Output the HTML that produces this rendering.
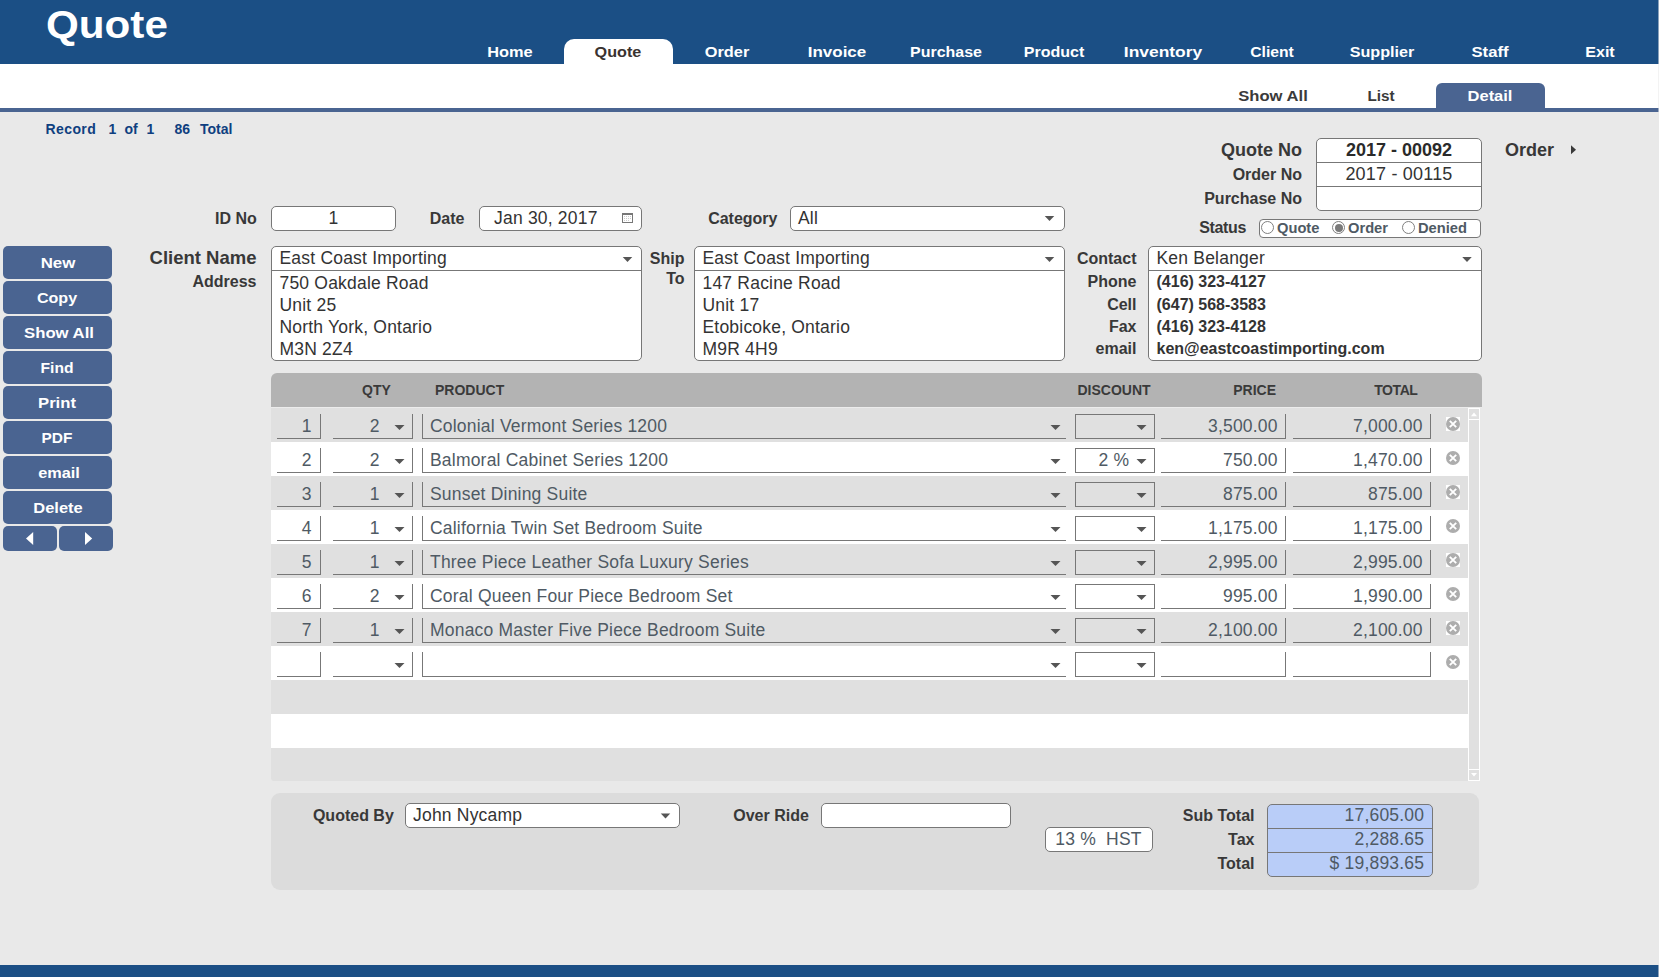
<!DOCTYPE html>
<html><head><meta charset="utf-8"><style>
html,body{margin:0;padding:0;}
body{width:1659px;height:977px;position:relative;overflow:hidden;background:#e9e9e9;font-family:"Liberation Sans",sans-serif;}
body>div,body>svg{position:absolute;}
</style></head><body>
<div style="left:0px;top:0px;width:1659px;height:64px;background:#1b4f85;"></div>
<div style="top:5.83px;font-size:38px;line-height:38px;font-weight:700;color:#fff;white-space:nowrap;transform:scaleX(1.11);left:46px;transform-origin:left center;">Quote</div>
<div style="top:45.15px;font-size:14px;line-height:14px;font-weight:700;color:#fff;white-space:nowrap;transform:scaleX(1.1684);left:109.60000000000002px;width:800px;text-align:center;">Home</div>
<div style="left:564px;top:39px;width:109px;height:25px;background:#fff;border-radius:10px 10px 0 0;"></div>
<div style="top:45.15px;font-size:14px;line-height:14px;font-weight:700;color:#3a3330;white-space:nowrap;transform:scaleX(1.1557);left:218.29999999999995px;width:800px;text-align:center;">Quote</div>
<div style="top:45.15px;font-size:14px;line-height:14px;font-weight:700;color:#fff;white-space:nowrap;transform:scaleX(1.1684);left:327.4px;width:800px;text-align:center;">Order</div>
<div style="top:45.15px;font-size:14px;line-height:14px;font-weight:700;color:#fff;white-space:nowrap;transform:scaleX(1.2133);left:437.1px;width:800px;text-align:center;">Invoice</div>
<div style="top:45.15px;font-size:14px;line-height:14px;font-weight:700;color:#fff;white-space:nowrap;transform:scaleX(1.1396);left:545.9px;width:800px;text-align:center;">Purchase</div>
<div style="top:45.15px;font-size:14px;line-height:14px;font-weight:700;color:#fff;white-space:nowrap;transform:scaleX(1.1435);left:653.7px;width:800px;text-align:center;">Product</div>
<div style="top:45.15px;font-size:14px;line-height:14px;font-weight:700;color:#fff;white-space:nowrap;transform:scaleX(1.2437);left:763.3px;width:800px;text-align:center;">Inventory</div>
<div style="top:45.15px;font-size:14px;line-height:14px;font-weight:700;color:#fff;white-space:nowrap;transform:scaleX(1.12);left:872.3px;width:800px;text-align:center;">Client</div>
<div style="top:45.15px;font-size:14px;line-height:14px;font-weight:700;color:#fff;white-space:nowrap;transform:scaleX(1.1526);left:981.5999999999999px;width:800px;text-align:center;">Supplier</div>
<div style="top:45.15px;font-size:14px;line-height:14px;font-weight:700;color:#fff;white-space:nowrap;transform:scaleX(1.1911);left:1090.2px;width:800px;text-align:center;">Staff</div>
<div style="top:45.15px;font-size:14px;line-height:14px;font-weight:700;color:#fff;white-space:nowrap;transform:scaleX(1.1471);left:1200.0px;width:800px;text-align:center;">Exit</div>
<div style="left:0px;top:64px;width:1659px;height:44px;background:#fff;"></div>
<div style="left:0px;top:108px;width:1659px;height:4px;background:#4a6491;"></div>
<div style="top:88.95px;font-size:14px;line-height:14px;font-weight:700;color:#3a3a3a;white-space:nowrap;transform:scaleX(1.1867);left:873.4000000000001px;width:800px;text-align:center;">Show All</div>
<div style="top:88.95px;font-size:14px;line-height:14px;font-weight:700;color:#3a3a3a;white-space:nowrap;transform:scaleX(1.0898);left:981.3px;width:800px;text-align:center;">List</div>
<div style="left:1436px;top:83px;width:109px;height:25px;background:#4a6491;border-radius:6px 6px 0 0;"></div>
<div style="top:88.95px;font-size:14px;line-height:14px;font-weight:700;color:#fff;white-space:nowrap;transform:scaleX(1.1778);left:1090.3px;width:800px;text-align:center;">Detail</div>
<div style="top:122.15px;font-size:14px;line-height:14px;font-weight:700;color:#0f3f80;white-space:nowrap;left:45.5px;letter-spacing:0.4px;">Record</div>
<div style="top:122.15px;font-size:14px;line-height:14px;font-weight:700;color:#0f3f80;white-space:nowrap;left:108.5px;">1</div>
<div style="top:122.15px;font-size:14px;line-height:14px;font-weight:700;color:#0f3f80;white-space:nowrap;left:124.5px;">of</div>
<div style="top:122.15px;font-size:14px;line-height:14px;font-weight:700;color:#0f3f80;white-space:nowrap;left:146.5px;">1</div>
<div style="top:122.15px;font-size:14px;line-height:14px;font-weight:700;color:#0f3f80;white-space:nowrap;left:174.5px;">86</div>
<div style="top:122.15px;font-size:14px;line-height:14px;font-weight:700;color:#0f3f80;white-space:nowrap;left:200px;">Total</div>
<div style="left:0px;top:965px;width:1659px;height:12px;background:#1b4f85;"></div>
<div style="left:3px;top:246px;width:109px;height:33px;background:#4a6491;border-radius:5px;"></div>
<div style="top:256.15px;font-size:14px;line-height:14px;font-weight:700;color:#fff;white-space:nowrap;transform:scaleX(1.2029);left:-342.5px;width:800px;text-align:center;">New</div>
<div style="left:3px;top:281px;width:109px;height:33px;background:#4a6491;border-radius:5px;"></div>
<div style="top:291.15px;font-size:14px;line-height:14px;font-weight:700;color:#fff;white-space:nowrap;transform:scaleX(1.1474);left:-342.6px;width:800px;text-align:center;">Copy</div>
<div style="left:3px;top:316px;width:109px;height:33px;background:#4a6491;border-radius:5px;"></div>
<div style="top:326.15px;font-size:14px;line-height:14px;font-weight:700;color:#fff;white-space:nowrap;transform:scaleX(1.1937);left:-341.5px;width:800px;text-align:center;">Show All</div>
<div style="left:3px;top:351px;width:109px;height:33px;background:#4a6491;border-radius:5px;"></div>
<div style="top:361.15px;font-size:14px;line-height:14px;font-weight:700;color:#fff;white-space:nowrap;transform:scaleX(1.1166);left:-342.9px;width:800px;text-align:center;">Find</div>
<div style="left:3px;top:386px;width:109px;height:33px;background:#4a6491;border-radius:5px;"></div>
<div style="top:396.15px;font-size:14px;line-height:14px;font-weight:700;color:#fff;white-space:nowrap;transform:scaleX(1.1904);left:-342.8px;width:800px;text-align:center;">Print</div>
<div style="left:3px;top:421px;width:109px;height:33px;background:#4a6491;border-radius:5px;"></div>
<div style="top:431.15px;font-size:14px;line-height:14px;font-weight:700;color:#fff;white-space:nowrap;transform:scaleX(1.103);left:-342.7px;width:800px;text-align:center;">PDF</div>
<div style="left:3px;top:456px;width:109px;height:33px;background:#4a6491;border-radius:5px;"></div>
<div style="top:466.15px;font-size:14px;line-height:14px;font-weight:700;color:#fff;white-space:nowrap;transform:scaleX(1.1653);left:-341.1px;width:800px;text-align:center;">email</div>
<div style="left:3px;top:491px;width:109px;height:33px;background:#4a6491;border-radius:5px;"></div>
<div style="top:501.15px;font-size:14px;line-height:14px;font-weight:700;color:#fff;white-space:nowrap;transform:scaleX(1.1744);left:-342.4px;width:800px;text-align:center;">Delete</div>
<div style="left:3px;top:526px;width:54px;height:25px;background:#4a6491;border-radius:5px;"></div>
<div style="left:59px;top:526px;width:54px;height:25px;background:#4a6491;border-radius:5px;"></div>
<svg style="left:0;top:0;width:1659px;height:977px" width="1659" height="977"><polygon points="33.2,532 33.2,545 26,538.5" fill="#fff"/><polygon points="85,532 85,545 92.2,538.5" fill="#fff"/></svg>
<div style="top:140.76px;font-size:18px;line-height:18px;font-weight:700;color:#383838;white-space:nowrap;right:357.00px;">Quote No</div>
<div style="top:166.96px;font-size:16px;line-height:16px;font-weight:700;color:#383838;white-space:nowrap;right:357.00px;">Order No</div>
<div style="top:191.46px;font-size:16px;line-height:16px;font-weight:700;color:#383838;white-space:nowrap;right:357.00px;">Purchase No</div>
<div style="left:1316px;top:138px;width:166px;height:73px;border:1px solid #777;border-radius:5px;background:#fff;box-sizing:border-box;"></div>
<div style="left:1316px;top:162px;width:166px;height:1px;background:#777;"></div>
<div style="left:1316px;top:186px;width:166px;height:1px;background:#777;"></div>
<div style="top:141.26px;font-size:18px;line-height:18px;font-weight:700;color:#2a2a2a;white-space:nowrap;left:999px;width:800px;text-align:center;">2017 - 00092</div>
<div style="top:165.26px;font-size:18px;line-height:18px;font-weight:400;color:#333;white-space:nowrap;letter-spacing:0.2px;left:999px;width:800px;text-align:center;">2017 - 00115</div>
<div style="top:140.76px;font-size:18px;line-height:18px;font-weight:700;color:#383838;white-space:nowrap;left:1505px;">Order</div>
<svg style="left:0;top:0;width:1659px;height:977px" width="1659" height="977"><polygon points="1571,145.2 1571,154.2 1576,149.7" fill="#3a3a3a"/></svg>
<div style="top:219.66px;font-size:16px;line-height:16px;font-weight:700;color:#383838;white-space:nowrap;right:413.00px;letter-spacing:-0.35px;">Status</div>
<div style="left:1259px;top:219px;width:222px;height:19px;border:1px solid #777;border-radius:4px;background:#fff;box-sizing:border-box;"></div>
<div style="left:1261.0px;top:221px;width:13px;height:13px;border-radius:50%;border:1px solid #808080;box-sizing:border-box;background:#fff;"></div>
<div style="top:220.86px;font-size:14.7px;line-height:14.7px;font-weight:700;color:#4f5a64;white-space:nowrap;left:1277.0px;">Quote</div>
<div style="left:1332.0px;top:221px;width:13px;height:13px;border-radius:50%;border:1px solid #808080;box-sizing:border-box;background:#fff;"></div>
<div style="left:1334.5px;top:223.5px;width:8px;height:8px;border-radius:50%;background:#7a7a7a;"></div>
<div style="top:220.86px;font-size:14.7px;line-height:14.7px;font-weight:700;color:#4f5a64;white-space:nowrap;left:1348.0px;">Order</div>
<div style="left:1402.0px;top:221px;width:13px;height:13px;border-radius:50%;border:1px solid #808080;box-sizing:border-box;background:#fff;"></div>
<div style="top:220.86px;font-size:14.7px;line-height:14.7px;font-weight:700;color:#4f5a64;white-space:nowrap;left:1418.0px;">Denied</div>
<div style="top:211.46px;font-size:16px;line-height:16px;font-weight:700;color:#383838;white-space:nowrap;right:1402.20px;">ID No</div>
<div style="left:271px;top:206px;width:125px;height:25px;border:1px solid #777;border-radius:5px;background:#fff;box-sizing:border-box;"></div>
<div style="top:210.19px;font-size:17.5px;line-height:17.5px;font-weight:400;color:#333;white-space:nowrap;letter-spacing:0.2px;left:-66.5px;width:800px;text-align:center;">1</div>
<div style="top:211.46px;font-size:16px;line-height:16px;font-weight:700;color:#383838;white-space:nowrap;right:1194.50px;">Date</div>
<div style="left:479px;top:206px;width:163px;height:25px;border:1px solid #777;border-radius:5px;background:#fff;box-sizing:border-box;"></div>
<div style="top:210.19px;font-size:17.5px;line-height:17.5px;font-weight:400;color:#333;white-space:nowrap;letter-spacing:0.2px;left:494px;">Jan 30, 2017</div>
<svg style="left:622px;top:213px;width:11px;height:10px" width="11" height="10"><rect x="0.5" y="0.5" width="10" height="9" fill="#fff" stroke="#777" stroke-width="1"/><rect x="0" y="0" width="11" height="2" fill="#777"/><g fill="#ccc"><rect x="2" y="3" width="1" height="1"/><rect x="4" y="3" width="1" height="1"/><rect x="6" y="3" width="1" height="1"/><rect x="8" y="3" width="1" height="1"/><rect x="2" y="5" width="1" height="1"/><rect x="4" y="5" width="1" height="1"/><rect x="6" y="5" width="1" height="1"/><rect x="8" y="5" width="1" height="1"/><rect x="2" y="7" width="1" height="1"/><rect x="4" y="7" width="1" height="1"/><rect x="6" y="7" width="1" height="1"/></g></svg>
<div style="top:211.46px;font-size:16px;line-height:16px;font-weight:700;color:#383838;white-space:nowrap;right:881.50px;">Category</div>
<div style="left:790px;top:206px;width:275px;height:25px;border:1px solid #777;border-radius:5px;background:#fff;box-sizing:border-box;"></div>
<div style="top:210.19px;font-size:17.5px;line-height:17.5px;font-weight:400;color:#333;white-space:nowrap;letter-spacing:0.2px;left:798px;">All</div>
<div style="top:249.34px;font-size:18.5px;line-height:18.5px;font-weight:700;color:#383838;white-space:nowrap;right:1402.50px;">Client Name</div>
<div style="top:274.46px;font-size:16px;line-height:16px;font-weight:700;color:#383838;white-space:nowrap;right:1402.50px;">Address</div>
<div style="left:271px;top:246px;width:371px;height:115px;border:1px solid #777;border-radius:5px;background:#fff;box-sizing:border-box;"></div>
<div style="left:271px;top:270px;width:371px;height:1px;background:#777;"></div>
<div style="top:250.19px;font-size:17.5px;line-height:17.5px;font-weight:400;color:#333;white-space:nowrap;letter-spacing:0.2px;left:279.5px;">East Coast Importing</div>
<div style="top:274.79px;font-size:17.5px;line-height:17.5px;font-weight:400;color:#333;white-space:nowrap;letter-spacing:0.2px;left:279.5px;">750 Oakdale Road</div>
<div style="top:296.79px;font-size:17.5px;line-height:17.5px;font-weight:400;color:#333;white-space:nowrap;letter-spacing:0.2px;left:279.5px;">Unit 25</div>
<div style="top:318.79px;font-size:17.5px;line-height:17.5px;font-weight:400;color:#333;white-space:nowrap;letter-spacing:0.2px;left:279.5px;">North York, Ontario</div>
<div style="top:340.79px;font-size:17.5px;line-height:17.5px;font-weight:400;color:#333;white-space:nowrap;letter-spacing:0.2px;left:279.5px;">M3N 2Z4</div>
<div style="top:250.66px;font-size:16px;line-height:16px;font-weight:700;color:#383838;white-space:nowrap;right:974.50px;">Ship</div>
<div style="top:270.66px;font-size:16px;line-height:16px;font-weight:700;color:#383838;white-space:nowrap;right:974.50px;">To</div>
<div style="left:694px;top:246px;width:371px;height:115px;border:1px solid #777;border-radius:5px;background:#fff;box-sizing:border-box;"></div>
<div style="left:694px;top:270px;width:371px;height:1px;background:#777;"></div>
<div style="top:250.19px;font-size:17.5px;line-height:17.5px;font-weight:400;color:#333;white-space:nowrap;letter-spacing:0.2px;left:702.5px;">East Coast Importing</div>
<div style="top:274.79px;font-size:17.5px;line-height:17.5px;font-weight:400;color:#333;white-space:nowrap;letter-spacing:0.2px;left:702.5px;">147 Racine Road</div>
<div style="top:296.79px;font-size:17.5px;line-height:17.5px;font-weight:400;color:#333;white-space:nowrap;letter-spacing:0.2px;left:702.5px;">Unit 17</div>
<div style="top:318.79px;font-size:17.5px;line-height:17.5px;font-weight:400;color:#333;white-space:nowrap;letter-spacing:0.2px;left:702.5px;">Etobicoke, Ontario</div>
<div style="top:340.79px;font-size:17.5px;line-height:17.5px;font-weight:400;color:#333;white-space:nowrap;letter-spacing:0.2px;left:702.5px;">M9R 4H9</div>
<div style="top:251.46px;font-size:16px;line-height:16px;font-weight:700;color:#383838;white-space:nowrap;right:522.50px;">Contact</div>
<div style="top:273.66px;font-size:16px;line-height:16px;font-weight:700;color:#383838;white-space:nowrap;right:522.50px;">Phone</div>
<div style="top:296.76px;font-size:16px;line-height:16px;font-weight:700;color:#383838;white-space:nowrap;right:522.50px;">Cell</div>
<div style="top:318.86px;font-size:16px;line-height:16px;font-weight:700;color:#383838;white-space:nowrap;right:522.50px;">Fax</div>
<div style="top:340.96px;font-size:16px;line-height:16px;font-weight:700;color:#383838;white-space:nowrap;right:522.50px;">email</div>
<div style="left:1148px;top:246px;width:334px;height:115px;border:1px solid #777;border-radius:5px;background:#fff;box-sizing:border-box;"></div>
<div style="left:1148px;top:270px;width:334px;height:1px;background:#777;"></div>
<div style="top:250.19px;font-size:17.5px;line-height:17.5px;font-weight:400;color:#333;white-space:nowrap;letter-spacing:0.2px;left:1156.5px;">Ken Belanger</div>
<div style="top:273.66px;font-size:16px;line-height:16px;font-weight:700;color:#333;white-space:nowrap;left:1156.5px;">(416) 323-4127</div>
<div style="top:296.76px;font-size:16px;line-height:16px;font-weight:700;color:#333;white-space:nowrap;left:1156.5px;">(647) 568-3583</div>
<div style="top:318.86px;font-size:16px;line-height:16px;font-weight:700;color:#333;white-space:nowrap;left:1156.5px;">(416) 323-4128</div>
<div style="top:340.96px;font-size:16px;line-height:16px;font-weight:700;color:#333;white-space:nowrap;left:1156.5px;">ken@eastcoastimporting.com</div>
<div style="left:271px;top:373px;width:1211px;height:34px;background:#b3b3b3;border-radius:6px 6px 0 0;"></div>
<div style="left:271px;top:407px;width:1211px;height:1px;background:#ececec;"></div>
<div style="top:383.35px;font-size:14px;line-height:14px;font-weight:700;color:#3a3a3a;white-space:nowrap;left:362px;">QTY</div>
<div style="top:383.35px;font-size:14px;line-height:14px;font-weight:700;color:#3a3a3a;white-space:nowrap;left:435px;">PRODUCT</div>
<div style="top:383.35px;font-size:14px;line-height:14px;font-weight:700;color:#3a3a3a;white-space:nowrap;left:1077.5px;">DISCOUNT</div>
<div style="top:383.35px;font-size:14px;line-height:14px;font-weight:700;color:#3a3a3a;white-space:nowrap;right:383.00px;">PRICE</div>
<div style="top:383.35px;font-size:14px;line-height:14px;font-weight:700;color:#3a3a3a;white-space:nowrap;right:241.50px;letter-spacing:-0.4px;">TOTAL</div>
<div style="left:271px;top:408px;width:1197px;height:373px;background:#e0e0e0;border-radius:0 0 0 3px;"></div>
<div style="left:271px;top:442px;width:1197px;height:34px;background:#fff;"></div>
<div style="left:271px;top:510px;width:1197px;height:34px;background:#fff;"></div>
<div style="left:271px;top:578px;width:1197px;height:34px;background:#fff;"></div>
<div style="left:271px;top:646px;width:1197px;height:34px;background:#fff;"></div>
<div style="left:271px;top:714px;width:1197px;height:34px;background:#fff;"></div>
<div style="left:1468px;top:408px;width:12px;height:373px;border:1px solid #fff;box-sizing:border-box;background:#e0e0e0;"></div>
<div style="left:1469px;top:419px;width:10px;height:1px;background:#fff;"></div>
<div style="left:1469px;top:769px;width:10px;height:1px;background:#fff;"></div>
<svg style="left:0;top:0;width:1659px;height:977px" width="1659" height="977"><polygon points="1471,416.2 1477,416.2 1474,412.6" fill="#fff"/><polygon points="1471,773 1477,773 1474,776.6" fill="#fff"/></svg>
<div style="left:277px;top:414px;width:44px;height:25px;border-right:1px solid #777;border-bottom:1px solid #777;box-sizing:border-box;"></div>
<div style="left:333px;top:414px;width:80px;height:25px;border-right:1px solid #777;border-bottom:1px solid #777;box-sizing:border-box;"></div>
<div style="left:422px;top:414px;width:644px;height:25px;border-left:1px solid #777;border-bottom:1px solid #777;box-sizing:border-box;"></div>
<div style="left:1075px;top:414px;width:80px;height:25px;border:1px solid #777;box-sizing:border-box;"></div>
<div style="left:1161px;top:414px;width:125px;height:25px;border-right:1px solid #777;border-bottom:1px solid #777;box-sizing:border-box;"></div>
<div style="left:1293px;top:414px;width:138px;height:25px;border-right:1px solid #777;border-bottom:1px solid #777;box-sizing:border-box;"></div>
<div style="top:418.19px;font-size:17.5px;line-height:17.5px;font-weight:400;color:#4f5a64;white-space:nowrap;letter-spacing:0.2px;right:1347.30px;">1</div>
<div style="top:418.19px;font-size:17.5px;line-height:17.5px;font-weight:400;color:#4f5a64;white-space:nowrap;letter-spacing:0.2px;right:1279.30px;">2</div>
<div style="top:418.19px;font-size:17.5px;line-height:17.5px;font-weight:400;color:#4f5a64;white-space:nowrap;letter-spacing:0.2px;left:430px;">Colonial Vermont Series 1200</div>
<div style="top:418.19px;font-size:17.5px;line-height:17.5px;font-weight:400;color:#4f5a64;white-space:nowrap;letter-spacing:0.2px;right:381.30px;">3,500.00</div>
<div style="top:418.19px;font-size:17.5px;line-height:17.5px;font-weight:400;color:#4f5a64;white-space:nowrap;letter-spacing:0.2px;right:236.30px;">7,000.00</div>
<svg style="left:1445px;top:416px;width:16px;height:16px" width="16" height="16"><rect x="1" y="1" width="14" height="14" fill="#fff"/><circle cx="8" cy="8" r="7" fill="#adadad"/><path d="M4.8 4.8 L11.2 11.2 M11.2 4.8 L4.8 11.2" stroke="#fff" stroke-width="1.9"/></svg>
<div style="left:277px;top:448px;width:44px;height:25px;border-right:1px solid #777;border-bottom:1px solid #777;box-sizing:border-box;"></div>
<div style="left:333px;top:448px;width:80px;height:25px;border-right:1px solid #777;border-bottom:1px solid #777;box-sizing:border-box;"></div>
<div style="left:422px;top:448px;width:644px;height:25px;border-left:1px solid #777;border-bottom:1px solid #777;box-sizing:border-box;"></div>
<div style="left:1075px;top:448px;width:80px;height:25px;border:1px solid #777;box-sizing:border-box;"></div>
<div style="left:1161px;top:448px;width:125px;height:25px;border-right:1px solid #777;border-bottom:1px solid #777;box-sizing:border-box;"></div>
<div style="left:1293px;top:448px;width:138px;height:25px;border-right:1px solid #777;border-bottom:1px solid #777;box-sizing:border-box;"></div>
<div style="top:452.19px;font-size:17.5px;line-height:17.5px;font-weight:400;color:#4f5a64;white-space:nowrap;letter-spacing:0.2px;right:1347.30px;">2</div>
<div style="top:452.19px;font-size:17.5px;line-height:17.5px;font-weight:400;color:#4f5a64;white-space:nowrap;letter-spacing:0.2px;right:1279.30px;">2</div>
<div style="top:452.19px;font-size:17.5px;line-height:17.5px;font-weight:400;color:#4f5a64;white-space:nowrap;letter-spacing:0.2px;left:430px;">Balmoral Cabinet Series 1200</div>
<div style="top:452.19px;font-size:17.5px;line-height:17.5px;font-weight:400;color:#4f5a64;white-space:nowrap;letter-spacing:0.2px;right:529.80px;">2 %</div>
<div style="top:452.19px;font-size:17.5px;line-height:17.5px;font-weight:400;color:#4f5a64;white-space:nowrap;letter-spacing:0.2px;right:381.30px;">750.00</div>
<div style="top:452.19px;font-size:17.5px;line-height:17.5px;font-weight:400;color:#4f5a64;white-space:nowrap;letter-spacing:0.2px;right:236.30px;">1,470.00</div>
<svg style="left:1445px;top:450px;width:16px;height:16px" width="16" height="16"><circle cx="8" cy="8" r="7" fill="#adadad"/><path d="M4.8 4.8 L11.2 11.2 M11.2 4.8 L4.8 11.2" stroke="#fff" stroke-width="1.9"/></svg>
<div style="left:277px;top:482px;width:44px;height:25px;border-right:1px solid #777;border-bottom:1px solid #777;box-sizing:border-box;"></div>
<div style="left:333px;top:482px;width:80px;height:25px;border-right:1px solid #777;border-bottom:1px solid #777;box-sizing:border-box;"></div>
<div style="left:422px;top:482px;width:644px;height:25px;border-left:1px solid #777;border-bottom:1px solid #777;box-sizing:border-box;"></div>
<div style="left:1075px;top:482px;width:80px;height:25px;border:1px solid #777;box-sizing:border-box;"></div>
<div style="left:1161px;top:482px;width:125px;height:25px;border-right:1px solid #777;border-bottom:1px solid #777;box-sizing:border-box;"></div>
<div style="left:1293px;top:482px;width:138px;height:25px;border-right:1px solid #777;border-bottom:1px solid #777;box-sizing:border-box;"></div>
<div style="top:486.19px;font-size:17.5px;line-height:17.5px;font-weight:400;color:#4f5a64;white-space:nowrap;letter-spacing:0.2px;right:1347.30px;">3</div>
<div style="top:486.19px;font-size:17.5px;line-height:17.5px;font-weight:400;color:#4f5a64;white-space:nowrap;letter-spacing:0.2px;right:1279.30px;">1</div>
<div style="top:486.19px;font-size:17.5px;line-height:17.5px;font-weight:400;color:#4f5a64;white-space:nowrap;letter-spacing:0.2px;left:430px;">Sunset Dining Suite</div>
<div style="top:486.19px;font-size:17.5px;line-height:17.5px;font-weight:400;color:#4f5a64;white-space:nowrap;letter-spacing:0.2px;right:381.30px;">875.00</div>
<div style="top:486.19px;font-size:17.5px;line-height:17.5px;font-weight:400;color:#4f5a64;white-space:nowrap;letter-spacing:0.2px;right:236.30px;">875.00</div>
<svg style="left:1445px;top:484px;width:16px;height:16px" width="16" height="16"><rect x="1" y="1" width="14" height="14" fill="#fff"/><circle cx="8" cy="8" r="7" fill="#adadad"/><path d="M4.8 4.8 L11.2 11.2 M11.2 4.8 L4.8 11.2" stroke="#fff" stroke-width="1.9"/></svg>
<div style="left:277px;top:516px;width:44px;height:25px;border-right:1px solid #777;border-bottom:1px solid #777;box-sizing:border-box;"></div>
<div style="left:333px;top:516px;width:80px;height:25px;border-right:1px solid #777;border-bottom:1px solid #777;box-sizing:border-box;"></div>
<div style="left:422px;top:516px;width:644px;height:25px;border-left:1px solid #777;border-bottom:1px solid #777;box-sizing:border-box;"></div>
<div style="left:1075px;top:516px;width:80px;height:25px;border:1px solid #777;box-sizing:border-box;"></div>
<div style="left:1161px;top:516px;width:125px;height:25px;border-right:1px solid #777;border-bottom:1px solid #777;box-sizing:border-box;"></div>
<div style="left:1293px;top:516px;width:138px;height:25px;border-right:1px solid #777;border-bottom:1px solid #777;box-sizing:border-box;"></div>
<div style="top:520.19px;font-size:17.5px;line-height:17.5px;font-weight:400;color:#4f5a64;white-space:nowrap;letter-spacing:0.2px;right:1347.30px;">4</div>
<div style="top:520.19px;font-size:17.5px;line-height:17.5px;font-weight:400;color:#4f5a64;white-space:nowrap;letter-spacing:0.2px;right:1279.30px;">1</div>
<div style="top:520.19px;font-size:17.5px;line-height:17.5px;font-weight:400;color:#4f5a64;white-space:nowrap;letter-spacing:0.2px;left:430px;">California Twin Set Bedroom Suite</div>
<div style="top:520.19px;font-size:17.5px;line-height:17.5px;font-weight:400;color:#4f5a64;white-space:nowrap;letter-spacing:0.2px;right:381.30px;">1,175.00</div>
<div style="top:520.19px;font-size:17.5px;line-height:17.5px;font-weight:400;color:#4f5a64;white-space:nowrap;letter-spacing:0.2px;right:236.30px;">1,175.00</div>
<svg style="left:1445px;top:518px;width:16px;height:16px" width="16" height="16"><circle cx="8" cy="8" r="7" fill="#adadad"/><path d="M4.8 4.8 L11.2 11.2 M11.2 4.8 L4.8 11.2" stroke="#fff" stroke-width="1.9"/></svg>
<div style="left:277px;top:550px;width:44px;height:25px;border-right:1px solid #777;border-bottom:1px solid #777;box-sizing:border-box;"></div>
<div style="left:333px;top:550px;width:80px;height:25px;border-right:1px solid #777;border-bottom:1px solid #777;box-sizing:border-box;"></div>
<div style="left:422px;top:550px;width:644px;height:25px;border-left:1px solid #777;border-bottom:1px solid #777;box-sizing:border-box;"></div>
<div style="left:1075px;top:550px;width:80px;height:25px;border:1px solid #777;box-sizing:border-box;"></div>
<div style="left:1161px;top:550px;width:125px;height:25px;border-right:1px solid #777;border-bottom:1px solid #777;box-sizing:border-box;"></div>
<div style="left:1293px;top:550px;width:138px;height:25px;border-right:1px solid #777;border-bottom:1px solid #777;box-sizing:border-box;"></div>
<div style="top:554.19px;font-size:17.5px;line-height:17.5px;font-weight:400;color:#4f5a64;white-space:nowrap;letter-spacing:0.2px;right:1347.30px;">5</div>
<div style="top:554.19px;font-size:17.5px;line-height:17.5px;font-weight:400;color:#4f5a64;white-space:nowrap;letter-spacing:0.2px;right:1279.30px;">1</div>
<div style="top:554.19px;font-size:17.5px;line-height:17.5px;font-weight:400;color:#4f5a64;white-space:nowrap;letter-spacing:0.2px;left:430px;">Three Piece Leather Sofa Luxury Series</div>
<div style="top:554.19px;font-size:17.5px;line-height:17.5px;font-weight:400;color:#4f5a64;white-space:nowrap;letter-spacing:0.2px;right:381.30px;">2,995.00</div>
<div style="top:554.19px;font-size:17.5px;line-height:17.5px;font-weight:400;color:#4f5a64;white-space:nowrap;letter-spacing:0.2px;right:236.30px;">2,995.00</div>
<svg style="left:1445px;top:552px;width:16px;height:16px" width="16" height="16"><rect x="1" y="1" width="14" height="14" fill="#fff"/><circle cx="8" cy="8" r="7" fill="#adadad"/><path d="M4.8 4.8 L11.2 11.2 M11.2 4.8 L4.8 11.2" stroke="#fff" stroke-width="1.9"/></svg>
<div style="left:277px;top:584px;width:44px;height:25px;border-right:1px solid #777;border-bottom:1px solid #777;box-sizing:border-box;"></div>
<div style="left:333px;top:584px;width:80px;height:25px;border-right:1px solid #777;border-bottom:1px solid #777;box-sizing:border-box;"></div>
<div style="left:422px;top:584px;width:644px;height:25px;border-left:1px solid #777;border-bottom:1px solid #777;box-sizing:border-box;"></div>
<div style="left:1075px;top:584px;width:80px;height:25px;border:1px solid #777;box-sizing:border-box;"></div>
<div style="left:1161px;top:584px;width:125px;height:25px;border-right:1px solid #777;border-bottom:1px solid #777;box-sizing:border-box;"></div>
<div style="left:1293px;top:584px;width:138px;height:25px;border-right:1px solid #777;border-bottom:1px solid #777;box-sizing:border-box;"></div>
<div style="top:588.19px;font-size:17.5px;line-height:17.5px;font-weight:400;color:#4f5a64;white-space:nowrap;letter-spacing:0.2px;right:1347.30px;">6</div>
<div style="top:588.19px;font-size:17.5px;line-height:17.5px;font-weight:400;color:#4f5a64;white-space:nowrap;letter-spacing:0.2px;right:1279.30px;">2</div>
<div style="top:588.19px;font-size:17.5px;line-height:17.5px;font-weight:400;color:#4f5a64;white-space:nowrap;letter-spacing:0.2px;left:430px;">Coral Queen Four Piece Bedroom Set</div>
<div style="top:588.19px;font-size:17.5px;line-height:17.5px;font-weight:400;color:#4f5a64;white-space:nowrap;letter-spacing:0.2px;right:381.30px;">995.00</div>
<div style="top:588.19px;font-size:17.5px;line-height:17.5px;font-weight:400;color:#4f5a64;white-space:nowrap;letter-spacing:0.2px;right:236.30px;">1,990.00</div>
<svg style="left:1445px;top:586px;width:16px;height:16px" width="16" height="16"><circle cx="8" cy="8" r="7" fill="#adadad"/><path d="M4.8 4.8 L11.2 11.2 M11.2 4.8 L4.8 11.2" stroke="#fff" stroke-width="1.9"/></svg>
<div style="left:277px;top:618px;width:44px;height:25px;border-right:1px solid #777;border-bottom:1px solid #777;box-sizing:border-box;"></div>
<div style="left:333px;top:618px;width:80px;height:25px;border-right:1px solid #777;border-bottom:1px solid #777;box-sizing:border-box;"></div>
<div style="left:422px;top:618px;width:644px;height:25px;border-left:1px solid #777;border-bottom:1px solid #777;box-sizing:border-box;"></div>
<div style="left:1075px;top:618px;width:80px;height:25px;border:1px solid #777;box-sizing:border-box;"></div>
<div style="left:1161px;top:618px;width:125px;height:25px;border-right:1px solid #777;border-bottom:1px solid #777;box-sizing:border-box;"></div>
<div style="left:1293px;top:618px;width:138px;height:25px;border-right:1px solid #777;border-bottom:1px solid #777;box-sizing:border-box;"></div>
<div style="top:622.19px;font-size:17.5px;line-height:17.5px;font-weight:400;color:#4f5a64;white-space:nowrap;letter-spacing:0.2px;right:1347.30px;">7</div>
<div style="top:622.19px;font-size:17.5px;line-height:17.5px;font-weight:400;color:#4f5a64;white-space:nowrap;letter-spacing:0.2px;right:1279.30px;">1</div>
<div style="top:622.19px;font-size:17.5px;line-height:17.5px;font-weight:400;color:#4f5a64;white-space:nowrap;letter-spacing:0.2px;left:430px;">Monaco Master Five Piece Bedroom Suite</div>
<div style="top:622.19px;font-size:17.5px;line-height:17.5px;font-weight:400;color:#4f5a64;white-space:nowrap;letter-spacing:0.2px;right:381.30px;">2,100.00</div>
<div style="top:622.19px;font-size:17.5px;line-height:17.5px;font-weight:400;color:#4f5a64;white-space:nowrap;letter-spacing:0.2px;right:236.30px;">2,100.00</div>
<svg style="left:1445px;top:620px;width:16px;height:16px" width="16" height="16"><rect x="1" y="1" width="14" height="14" fill="#fff"/><circle cx="8" cy="8" r="7" fill="#adadad"/><path d="M4.8 4.8 L11.2 11.2 M11.2 4.8 L4.8 11.2" stroke="#fff" stroke-width="1.9"/></svg>
<div style="left:277px;top:652px;width:44px;height:25px;border-right:1px solid #777;border-bottom:1px solid #777;box-sizing:border-box;"></div>
<div style="left:333px;top:652px;width:80px;height:25px;border-right:1px solid #777;border-bottom:1px solid #777;box-sizing:border-box;"></div>
<div style="left:422px;top:652px;width:644px;height:25px;border-left:1px solid #777;border-bottom:1px solid #777;box-sizing:border-box;"></div>
<div style="left:1075px;top:652px;width:80px;height:25px;border:1px solid #777;box-sizing:border-box;"></div>
<div style="left:1161px;top:652px;width:125px;height:25px;border-right:1px solid #777;border-bottom:1px solid #777;box-sizing:border-box;"></div>
<div style="left:1293px;top:652px;width:138px;height:25px;border-right:1px solid #777;border-bottom:1px solid #777;box-sizing:border-box;"></div>
<svg style="left:1445px;top:654px;width:16px;height:16px" width="16" height="16"><circle cx="8" cy="8" r="7" fill="#adadad"/><path d="M4.8 4.8 L11.2 11.2 M11.2 4.8 L4.8 11.2" stroke="#fff" stroke-width="1.9"/></svg>
<div style="left:271px;top:793px;width:1208px;height:97px;background:#dcdcdc;border-radius:9px;"></div>
<div style="top:807.66px;font-size:16px;line-height:16px;font-weight:700;color:#383838;white-space:nowrap;right:1265.20px;">Quoted By</div>
<div style="left:405px;top:803px;width:275px;height:25px;border:1px solid #777;border-radius:5px;background:#fff;box-sizing:border-box;"></div>
<div style="top:807.19px;font-size:17.5px;line-height:17.5px;font-weight:400;color:#333;white-space:nowrap;letter-spacing:0.2px;left:413px;">John Nycamp</div>
<div style="top:807.66px;font-size:16px;line-height:16px;font-weight:700;color:#383838;white-space:nowrap;right:850.20px;">Over Ride</div>
<div style="left:821px;top:803px;width:190px;height:25px;border:1px solid #777;border-radius:5px;background:#fff;box-sizing:border-box;"></div>
<div style="left:1045px;top:827px;width:108px;height:25px;border:1px solid #777;border-radius:5px;background:#fff;box-sizing:border-box;"></div>
<div style="top:831.19px;font-size:17.5px;line-height:17.5px;font-weight:400;color:#4f5a64;white-space:nowrap;letter-spacing:0.2px;left:698.5px;width:800px;text-align:center;">13 %&nbsp; HST</div>
<div style="top:808.46px;font-size:16px;line-height:16px;font-weight:700;color:#383838;white-space:nowrap;right:404.50px;">Sub Total</div>
<div style="top:832.46px;font-size:16px;line-height:16px;font-weight:700;color:#383838;white-space:nowrap;right:404.50px;">Tax</div>
<div style="top:856.46px;font-size:16px;line-height:16px;font-weight:700;color:#383838;white-space:nowrap;right:404.50px;">Total</div>
<div style="left:1267px;top:804px;width:166px;height:73px;border:1px solid #777;border-radius:5px;background:#b9cdf8;box-sizing:border-box;"></div>
<div style="left:1267px;top:828px;width:166px;height:1px;background:#777;"></div>
<div style="left:1267px;top:852px;width:166px;height:1px;background:#777;"></div>
<div style="top:807.39px;font-size:17.5px;line-height:17.5px;font-weight:400;color:#4f5a64;white-space:nowrap;letter-spacing:0.2px;right:234.80px;">17,605.00</div>
<div style="top:831.39px;font-size:17.5px;line-height:17.5px;font-weight:400;color:#4f5a64;white-space:nowrap;letter-spacing:0.2px;right:234.80px;">2,288.65</div>
<div style="top:855.39px;font-size:17.5px;line-height:17.5px;font-weight:400;color:#4f5a64;white-space:nowrap;letter-spacing:0.2px;right:234.80px;">$ 19,893.65</div>
<div style="left:1658px;top:0px;width:1px;height:977px;background:rgba(233,233,233,0.55);"></div>
<svg style="left:0;top:0;width:1659px;height:977px" width="1659" height="977"><polygon points="1044.75,216.0 1054.25,216.0 1049.5,221.0" fill="#555"/><polygon points="622.75,256.9 632.25,256.9 627.5,261.9" fill="#555"/><polygon points="1044.75,256.9 1054.25,256.9 1049.5,261.9" fill="#555"/><polygon points="1462.25,256.9 1471.75,256.9 1467,261.9" fill="#555"/><polygon points="394.5,425.0 404.5,425.0 399.5,430.0" fill="#555"/><polygon points="1050.5,425.0 1060.5,425.0 1055.5,430.0" fill="#555"/><polygon points="1136.5,425.0 1146.5,425.0 1141.5,430.0" fill="#555"/><polygon points="394.5,459.0 404.5,459.0 399.5,464.0" fill="#555"/><polygon points="1050.5,459.0 1060.5,459.0 1055.5,464.0" fill="#555"/><polygon points="1136.5,459.0 1146.5,459.0 1141.5,464.0" fill="#555"/><polygon points="394.5,493.0 404.5,493.0 399.5,498.0" fill="#555"/><polygon points="1050.5,493.0 1060.5,493.0 1055.5,498.0" fill="#555"/><polygon points="1136.5,493.0 1146.5,493.0 1141.5,498.0" fill="#555"/><polygon points="394.5,527.0 404.5,527.0 399.5,532.0" fill="#555"/><polygon points="1050.5,527.0 1060.5,527.0 1055.5,532.0" fill="#555"/><polygon points="1136.5,527.0 1146.5,527.0 1141.5,532.0" fill="#555"/><polygon points="394.5,561.0 404.5,561.0 399.5,566.0" fill="#555"/><polygon points="1050.5,561.0 1060.5,561.0 1055.5,566.0" fill="#555"/><polygon points="1136.5,561.0 1146.5,561.0 1141.5,566.0" fill="#555"/><polygon points="394.5,595.0 404.5,595.0 399.5,600.0" fill="#555"/><polygon points="1050.5,595.0 1060.5,595.0 1055.5,600.0" fill="#555"/><polygon points="1136.5,595.0 1146.5,595.0 1141.5,600.0" fill="#555"/><polygon points="394.5,629.0 404.5,629.0 399.5,634.0" fill="#555"/><polygon points="1050.5,629.0 1060.5,629.0 1055.5,634.0" fill="#555"/><polygon points="1136.5,629.0 1146.5,629.0 1141.5,634.0" fill="#555"/><polygon points="394.5,663.0 404.5,663.0 399.5,668.0" fill="#555"/><polygon points="1050.5,663.0 1060.5,663.0 1055.5,668.0" fill="#555"/><polygon points="1136.5,663.0 1146.5,663.0 1141.5,668.0" fill="#555"/><polygon points="660.75,813.5 670.25,813.5 665.5,818.5" fill="#555"/></svg>
</body></html>
